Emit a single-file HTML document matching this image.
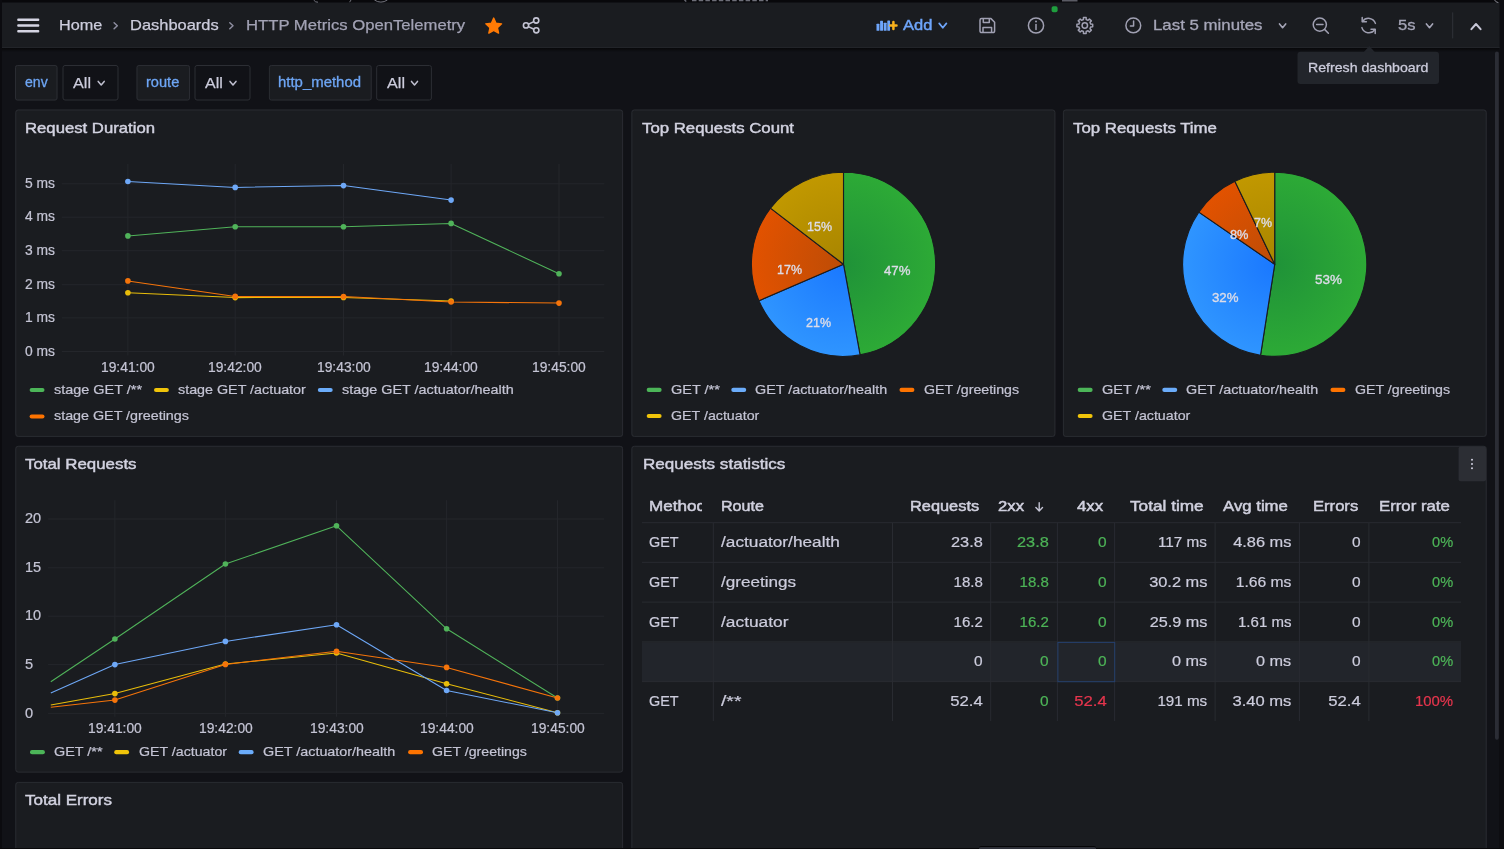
<!DOCTYPE html>
<html lang="en"><head><meta charset="utf-8"><title>HTTP Metrics OpenTelemetry - Dashboards - Grafana</title>
<style>
html,body{margin:0;padding:0;background:#111217;}
body{width:1504px;height:850px;position:relative;overflow:hidden;font-family:"Liberation Sans",sans-serif;color:#ccccdc;}
.t{position:absolute;white-space:nowrap;display:block;}
.b{position:absolute;box-sizing:border-box;}
#tx{position:absolute;left:0;top:0;width:1504px;height:850px;will-change:transform;}
svg{position:absolute;left:0;top:0;overflow:visible;}
svg text{font-family:"Liberation Sans",sans-serif;}
</style></head><body>
<svg width="1504" height="850" viewBox="0 0 1504 850"><defs><linearGradient id="tsh" x1="0" y1="0" x2="0" y2="1"><stop offset="0" stop-color="#000" stop-opacity=".6"/><stop offset="1" stop-color="#000" stop-opacity="0"/></linearGradient><radialGradient id="ga0" gradientUnits="userSpaceOnUse" cx="843.5" cy="264.3" r="92.1"><stop offset="0" stop-color="#1f9238"/><stop offset="1" stop-color="#2daa36"/></radialGradient><radialGradient id="ga1" gradientUnits="userSpaceOnUse" cx="843.5" cy="264.3" r="92.1"><stop offset="0" stop-color="#1a78ff"/><stop offset="1" stop-color="#2f95ff"/></radialGradient><radialGradient id="ga2" gradientUnits="userSpaceOnUse" cx="843.5" cy="264.3" r="92.1"><stop offset="0" stop-color="#bd4c06"/><stop offset="1" stop-color="#e25200"/></radialGradient><radialGradient id="ga3" gradientUnits="userSpaceOnUse" cx="843.5" cy="264.3" r="92.1"><stop offset="0" stop-color="#a88500"/><stop offset="1" stop-color="#c19800"/></radialGradient><radialGradient id="gb0" gradientUnits="userSpaceOnUse" cx="1274.7" cy="264.3" r="92.1"><stop offset="0" stop-color="#1f9238"/><stop offset="1" stop-color="#2daa36"/></radialGradient><radialGradient id="gb1" gradientUnits="userSpaceOnUse" cx="1274.7" cy="264.3" r="92.1"><stop offset="0" stop-color="#1a78ff"/><stop offset="1" stop-color="#2f95ff"/></radialGradient><radialGradient id="gb2" gradientUnits="userSpaceOnUse" cx="1274.7" cy="264.3" r="92.1"><stop offset="0" stop-color="#bd4c06"/><stop offset="1" stop-color="#e25200"/></radialGradient><radialGradient id="gb3" gradientUnits="userSpaceOnUse" cx="1274.7" cy="264.3" r="92.1"><stop offset="0" stop-color="#a88500"/><stop offset="1" stop-color="#c19800"/></radialGradient></defs><rect x="0.00" y="0.00" width="1504.00" height="2.60" fill="#08080b"/>
<rect x="0.00" y="0.00" width="2.00" height="850.00" fill="#0b0b0f"/>
<rect x="1499.00" y="0.00" width="5.00" height="850.00" fill="#0d0d11"/>
<rect x="1495.00" y="51.50" width="3.80" height="688.20" rx="2" fill="#2b2d35"/>
<rect x="2" y="47.8" width="1497" height="4.5" fill="url(#tsh)"/>
<rect x="2.00" y="2.60" width="1497.50" height="45.40" fill="#1a1c20"/>
<rect x="2.00" y="47.00" width="1497.50" height="1.00" fill="#222429"/>
<rect x="17.20" y="18.50" width="22.10" height="2.40" rx="1" fill="#d5d5e3"/>
<rect x="17.20" y="24.30" width="22.10" height="2.40" rx="1" fill="#d5d5e3"/>
<rect x="17.20" y="30.10" width="22.10" height="2.40" rx="1" fill="#d5d5e3"/>
<path d="M114.10000000000001 22.8 L117.3 25.8 L114.10000000000001 28.8" fill="none" stroke="#8e8ea0" stroke-width="1.5" stroke-linecap="round" stroke-linejoin="round"/>
<path d="M229.8 22.8 L233.0 25.8 L229.8 28.8" fill="none" stroke="#8e8ea0" stroke-width="1.5" stroke-linecap="round" stroke-linejoin="round"/>
<polygon points="493.70,18.10 495.99,23.24 501.59,23.84 497.41,27.61 498.58,33.11 493.70,30.30 488.82,33.11 489.99,27.61 485.81,23.84 491.41,23.24" fill="#ff7a05" stroke="#ff7a05" stroke-width="1.4" stroke-linejoin="round"/>
<g fill="none" stroke="#c4c4d4" stroke-width="1.6"><circle cx="536.2" cy="20.5" r="2.6"/><circle cx="536.3" cy="30.3" r="2.6"/><circle cx="526" cy="25.4" r="2.6"/><path d="M528.4 24.2 L533.8 21.6 M528.4 26.6 L533.9 29.2"/></g>
<g fill="#6ea5fa"><rect x="876.5" y="23.8" width="2.9" height="7" rx=".5"/><rect x="880.1" y="20.8" width="2.9" height="10" rx=".5"/><rect x="883.7" y="22.8" width="2.9" height="8" rx=".5"/><rect x="887.3" y="20.4" width="2.7" height="10.4" rx=".5"/></g>
<path d="M893.4 22.1 V28.9 M890.3 25.5 H896.5" stroke="#f9b21c" stroke-width="2.5" stroke-linecap="round" fill="none"/>
<path d="M939.1999999999999 23.400000000000002 L942.8 27.8 L946.4 23.400000000000002" fill="none" stroke="#6ea5fa" stroke-width="1.7" stroke-linecap="round" stroke-linejoin="round"/>
<g fill="none" stroke="#a0a0b2" stroke-width="1.5" stroke-linejoin="round"><path d="M981.6 18.6 H991 L994.6 22.2 V31 a1.6 1.6 0 0 1 -1.6 1.6 H981.6 a1.6 1.6 0 0 1 -1.6 -1.6 V20.2 a1.6 1.6 0 0 1 1.6 -1.6 Z"/><path d="M983.3 18.8 V22.4 H989.3 V18.8"/><path d="M983 32.4 V27.4 H991.6 V32.4"/></g>
<g fill="none" stroke="#a0a0b2" stroke-width="1.5"><circle cx="1036" cy="25.5" r="7.6"/><path d="M1036 24.6 V29.6" stroke-linecap="round"/></g><circle cx="1036" cy="21.6" r="1" fill="#a0a0b2"/>
<rect x="1051.6" y="6.2" width="6" height="6" rx="1.8" fill="#1f9e3e"/>
<g fill="none" stroke="#a0a0b2" stroke-width="1.5" stroke-linejoin="round"><path d="M1092.68 24.15 L1092.68 26.85 L1090.74 26.89 L1089.98 28.72 L1091.33 30.12 L1089.42 32.03 L1088.02 30.68 L1086.19 31.44 L1086.15 33.38 L1083.45 33.38 L1083.41 31.44 L1081.58 30.68 L1080.18 32.03 L1078.27 30.12 L1079.62 28.72 L1078.86 26.89 L1076.92 26.85 L1076.92 24.15 L1078.86 24.11 L1079.62 22.28 L1078.27 20.88 L1080.18 18.97 L1081.58 20.32 L1083.41 19.56 L1083.45 17.62 L1086.15 17.62 L1086.19 19.56 L1088.02 20.32 L1089.42 18.97 L1091.33 20.88 L1089.98 22.28 L1090.74 24.11 Z"/><circle cx="1084.8" cy="25.5" r="2.7"/></g>
<g fill="none" stroke="#a0a0b2" stroke-width="1.5"><circle cx="1133.3" cy="25.4" r="7.4"/><path d="M1133.6 21 V26 H1130.4" stroke-linecap="round" stroke-linejoin="round"/></g>
<path d="M1279.5 23.900000000000002 L1282.6 27.7 L1285.6999999999998 23.900000000000002" fill="none" stroke="#a6a6b8" stroke-width="1.6" stroke-linecap="round" stroke-linejoin="round"/>
<g fill="none" stroke="#a0a0b2" stroke-width="1.5" stroke-linecap="round"><circle cx="1319.8" cy="24.6" r="6.6"/><path d="M1324.8 29.6 L1328.4 33.2 M1316.6 24.6 H1323"/></g>
<g fill="none" stroke="#a0a0b2" stroke-width="1.5" stroke-linecap="round" stroke-linejoin="round"><path d="M1375.4 23.4 A7.2 7.2 0 0 0 1362.6 21.4"/><path d="M1361.9 27.6 A7.2 7.2 0 0 0 1374.8 29.6"/><path d="M1362.2 17.6 V21.8 H1366.4"/><path d="M1375.2 33.4 V29.2 H1371"/></g>
<path d="M1426.4 23.900000000000002 L1429.5 27.7 L1432.6 23.900000000000002" fill="none" stroke="#a6a6b8" stroke-width="1.6" stroke-linecap="round" stroke-linejoin="round"/>
<rect x="1452.20" y="12.40" width="1.00" height="26.00" fill="#303238"/>
<path d="M1471.4 29.200000000000003 L1476 24.0 L1480.6 29.200000000000003" fill="none" stroke="#c8c8d8" stroke-width="2" stroke-linecap="round" stroke-linejoin="round"/>
<path d="M1363.4 52.5 L1369.3 46 L1375.2 52.5 Z" fill="#22252b"/>
<rect x="1297.50" y="51.80" width="141.50" height="32.20" rx="3" fill="#22252b"/>
<rect x="15.00" y="65.00" width="42.50" height="35.50" rx="2" fill="#1a1c20"/>
<rect x="15.50" y="65.50" width="41.50" height="34.50" rx="2" fill="none" stroke="#2a2c32" stroke-width="1"/>
<rect x="62.50" y="65.00" width="56.00" height="35.50" rx="2" fill="#111217"/>
<rect x="63.00" y="65.50" width="55.00" height="34.50" rx="2" fill="none" stroke="#2c2e34" stroke-width="1"/>
<path d="M98.2 81.4 L101.2 85.0 L104.2 81.4" fill="none" stroke="#c0c0d0" stroke-width="1.5" stroke-linecap="round" stroke-linejoin="round"/>
<rect x="136.50" y="65.00" width="53.50" height="35.50" rx="2" fill="#1a1c20"/>
<rect x="137.00" y="65.50" width="52.50" height="34.50" rx="2" fill="none" stroke="#2a2c32" stroke-width="1"/>
<rect x="194.50" y="65.00" width="56.00" height="35.50" rx="2" fill="#111217"/>
<rect x="195.00" y="65.50" width="55.00" height="34.50" rx="2" fill="none" stroke="#2c2e34" stroke-width="1"/>
<path d="M230 81.4 L233 85.0 L236 81.4" fill="none" stroke="#c0c0d0" stroke-width="1.5" stroke-linecap="round" stroke-linejoin="round"/>
<rect x="268.90" y="65.00" width="102.80" height="35.50" rx="2" fill="#1a1c20"/>
<rect x="269.40" y="65.50" width="101.80" height="34.50" rx="2" fill="none" stroke="#2a2c32" stroke-width="1"/>
<rect x="376.20" y="65.00" width="55.70" height="35.50" rx="2" fill="#111217"/>
<rect x="376.70" y="65.50" width="54.70" height="34.50" rx="2" fill="none" stroke="#2c2e34" stroke-width="1"/>
<path d="M411.5 81.4 L414.5 85.0 L417.5 81.4" fill="none" stroke="#c0c0d0" stroke-width="1.5" stroke-linecap="round" stroke-linejoin="round"/>
<rect x="15.30" y="109.50" width="607.80" height="327.40" rx="2.5" fill="#1a1c20"/>
<rect x="15.80" y="110.00" width="606.80" height="326.40" rx="2.5" fill="none" stroke="#292b31" stroke-width="1"/>
<rect x="631.40" y="109.50" width="424.00" height="327.40" rx="2.5" fill="#1a1c20"/>
<rect x="631.90" y="110.00" width="423.00" height="326.40" rx="2.5" fill="none" stroke="#292b31" stroke-width="1"/>
<rect x="1062.90" y="109.50" width="423.80" height="327.40" rx="2.5" fill="#1a1c20"/>
<rect x="1063.40" y="110.00" width="422.80" height="326.40" rx="2.5" fill="none" stroke="#292b31" stroke-width="1"/>
<rect x="15.30" y="445.80" width="607.80" height="326.80" rx="2.5" fill="#1a1c20"/>
<rect x="15.80" y="446.30" width="606.80" height="325.80" rx="2.5" fill="none" stroke="#292b31" stroke-width="1"/>
<rect x="631.40" y="445.80" width="855.30" height="414.20" rx="2.5" fill="#1a1c20"/>
<rect x="631.90" y="446.30" width="854.30" height="413.20" rx="2.5" fill="none" stroke="#292b31" stroke-width="1"/>
<rect x="15.30" y="781.90" width="607.80" height="78.10" rx="2.5" fill="#1a1c20"/>
<rect x="15.80" y="782.40" width="606.80" height="77.10" rx="2.5" fill="none" stroke="#292b31" stroke-width="1"/>
<rect x="29.60" y="388.00" width="14.90" height="4.10" rx="2" fill="#4cb558"/>
<rect x="154.00" y="388.00" width="14.90" height="4.10" rx="2" fill="#f0c40a"/>
<rect x="317.80" y="388.00" width="14.90" height="4.10" rx="2" fill="#6bacfa"/>
<rect x="29.60" y="414.40" width="14.90" height="4.10" rx="2" fill="#fd7300"/>
<rect x="646.70" y="387.80" width="14.90" height="4.10" rx="2" fill="#4cb558"/>
<rect x="731.30" y="387.80" width="14.90" height="4.10" rx="2" fill="#6bacfa"/>
<rect x="899.50" y="387.80" width="14.90" height="4.10" rx="2" fill="#fd7300"/>
<rect x="646.70" y="414.00" width="14.90" height="4.10" rx="2" fill="#f0c40a"/>
<rect x="1077.70" y="387.80" width="14.90" height="4.10" rx="2" fill="#4cb558"/>
<rect x="1162.30" y="387.80" width="14.90" height="4.10" rx="2" fill="#6bacfa"/>
<rect x="1330.50" y="387.80" width="14.90" height="4.10" rx="2" fill="#fd7300"/>
<rect x="1077.70" y="414.00" width="14.90" height="4.10" rx="2" fill="#f0c40a"/>
<rect x="30.00" y="750.10" width="14.90" height="4.10" rx="2" fill="#4cb558"/>
<rect x="114.20" y="750.10" width="14.90" height="4.10" rx="2" fill="#f0c40a"/>
<rect x="238.70" y="750.10" width="14.90" height="4.10" rx="2" fill="#6bacfa"/>
<rect x="408.10" y="750.10" width="14.90" height="4.10" rx="2" fill="#fd7300"/>
<path d="M61.8 183.8 H604.3" stroke="#24262b" stroke-width="1"/>
<path d="M61.8 217.2 H604.3" stroke="#24262b" stroke-width="1"/>
<path d="M61.8 250.7 H604.3" stroke="#24262b" stroke-width="1"/>
<path d="M61.8 284.7 H604.3" stroke="#24262b" stroke-width="1"/>
<path d="M61.8 317.9 H604.3" stroke="#24262b" stroke-width="1"/>
<path d="M61.8 351.5 H604.3" stroke="#24262b" stroke-width="1"/>
<path d="M127.9 164 V355.5" stroke="#24262b" stroke-width="1"/>
<path d="M235.2 164 V355.5" stroke="#24262b" stroke-width="1"/>
<path d="M343.5 164 V355.5" stroke="#24262b" stroke-width="1"/>
<path d="M451.1 164 V355.5" stroke="#24262b" stroke-width="1"/>
<path d="M559 164 V355.5" stroke="#24262b" stroke-width="1"/>
<path d="M127.9 235.9 L235.2 226.7 L343.5 226.8 L451.1 223.4 L559.0 273.8" fill="none" stroke="#50b35a" stroke-width="1.05" stroke-linejoin="round"/>
<circle cx="127.9" cy="235.9" r="2.8" fill="#50b35a"/>
<circle cx="235.2" cy="226.7" r="2.8" fill="#50b35a"/>
<circle cx="343.5" cy="226.8" r="2.8" fill="#50b35a"/>
<circle cx="451.1" cy="223.4" r="2.8" fill="#50b35a"/>
<circle cx="559.0" cy="273.8" r="2.8" fill="#50b35a"/>
<path d="M127.9 292.7 L235.2 297.6 L343.5 297.4 L451.1 301.0" fill="none" stroke="#e8bd0a" stroke-width="1.05" stroke-linejoin="round"/>
<circle cx="127.9" cy="292.7" r="2.8" fill="#e8bd0a"/>
<circle cx="235.2" cy="297.6" r="2.8" fill="#e8bd0a"/>
<circle cx="343.5" cy="297.4" r="2.8" fill="#e8bd0a"/>
<circle cx="451.1" cy="301.0" r="2.8" fill="#e8bd0a"/>
<path d="M127.9 181.5 L235.2 187.4 L343.5 185.6 L451.1 200.1" fill="none" stroke="#6ea8f7" stroke-width="1.05" stroke-linejoin="round"/>
<circle cx="127.9" cy="181.5" r="2.8" fill="#6ea8f7"/>
<circle cx="235.2" cy="187.4" r="2.8" fill="#6ea8f7"/>
<circle cx="343.5" cy="185.6" r="2.8" fill="#6ea8f7"/>
<circle cx="451.1" cy="200.1" r="2.8" fill="#6ea8f7"/>
<path d="M127.9 280.9 L235.2 296.4 L343.5 296.6 L451.1 302.0 L559.0 303.1" fill="none" stroke="#f5740a" stroke-width="1.05" stroke-linejoin="round"/>
<circle cx="127.9" cy="280.9" r="2.8" fill="#f5740a"/>
<circle cx="235.2" cy="296.4" r="2.8" fill="#f5740a"/>
<circle cx="343.5" cy="296.6" r="2.8" fill="#f5740a"/>
<circle cx="451.1" cy="302.0" r="2.8" fill="#f5740a"/>
<circle cx="559.0" cy="303.1" r="2.8" fill="#f5740a"/>
<path d="M48.1 519 H604.2" stroke="#24262b" stroke-width="1"/>
<path d="M48.1 567.8 H604.2" stroke="#24262b" stroke-width="1"/>
<path d="M48.1 616.2 H604.2" stroke="#24262b" stroke-width="1"/>
<path d="M48.1 664.6 H604.2" stroke="#24262b" stroke-width="1"/>
<path d="M48.1 713.4 H604.2" stroke="#24262b" stroke-width="1"/>
<path d="M114.9 500.2 V716.8" stroke="#24262b" stroke-width="1"/>
<path d="M225.4 500.2 V716.8" stroke="#24262b" stroke-width="1"/>
<path d="M336.5 500.2 V716.8" stroke="#24262b" stroke-width="1"/>
<path d="M446.6 500.2 V716.8" stroke="#24262b" stroke-width="1"/>
<path d="M557.5 500.2 V716.8" stroke="#24262b" stroke-width="1"/>
<path d="M50.8 681.7 L114.9 639.0 L225.4 564.0 L336.5 525.8 L446.6 628.8 L557.5 698.0" fill="none" stroke="#50b35a" stroke-width="1.05" stroke-linejoin="round"/>
<circle cx="114.9" cy="639.0" r="2.8" fill="#50b35a"/>
<circle cx="225.4" cy="564.0" r="2.8" fill="#50b35a"/>
<circle cx="336.5" cy="525.8" r="2.8" fill="#50b35a"/>
<circle cx="446.6" cy="628.8" r="2.8" fill="#50b35a"/>
<circle cx="557.5" cy="698.0" r="2.8" fill="#50b35a"/>
<path d="M50.8 704.9 L114.9 693.6 L225.4 664.0 L336.5 653.0 L446.6 683.7 L557.5 712.7" fill="none" stroke="#e8bd0a" stroke-width="1.05" stroke-linejoin="round"/>
<circle cx="114.9" cy="693.6" r="2.8" fill="#e8bd0a"/>
<circle cx="225.4" cy="664.0" r="2.8" fill="#e8bd0a"/>
<circle cx="336.5" cy="653.0" r="2.8" fill="#e8bd0a"/>
<circle cx="446.6" cy="683.7" r="2.8" fill="#e8bd0a"/>
<circle cx="557.5" cy="712.7" r="2.8" fill="#e8bd0a"/>
<path d="M50.8 693.0 L114.9 664.6 L225.4 641.4 L336.5 624.7 L446.6 690.5 L557.5 712.7" fill="none" stroke="#6ea8f7" stroke-width="1.05" stroke-linejoin="round"/>
<circle cx="114.9" cy="664.6" r="2.8" fill="#6ea8f7"/>
<circle cx="225.4" cy="641.4" r="2.8" fill="#6ea8f7"/>
<circle cx="336.5" cy="624.7" r="2.8" fill="#6ea8f7"/>
<circle cx="446.6" cy="690.5" r="2.8" fill="#6ea8f7"/>
<circle cx="557.5" cy="712.7" r="2.8" fill="#6ea8f7"/>
<path d="M50.8 707.3 L114.9 700.1 L225.4 664.4 L336.5 651.3 L446.6 667.4 L557.5 698.0" fill="none" stroke="#f5740a" stroke-width="1.05" stroke-linejoin="round"/>
<circle cx="114.9" cy="700.1" r="2.8" fill="#f5740a"/>
<circle cx="225.4" cy="664.4" r="2.8" fill="#f5740a"/>
<circle cx="336.5" cy="651.3" r="2.8" fill="#f5740a"/>
<circle cx="446.6" cy="667.4" r="2.8" fill="#f5740a"/>
<circle cx="557.5" cy="698.0" r="2.8" fill="#f5740a"/>
<path d="M843.5 264.3 L843.50 172.20 A92.1 92.1 0 0 1 860.06 354.90 Z" fill="url(#ga0)" stroke="#1a1c20" stroke-width="1.1" stroke-linejoin="round"/>
<path d="M843.5 264.3 L860.06 354.90 A92.1 92.1 0 0 1 758.92 300.74 Z" fill="url(#ga1)" stroke="#1a1c20" stroke-width="1.1" stroke-linejoin="round"/>
<path d="M843.5 264.3 L758.92 300.74 A92.1 92.1 0 0 1 770.48 208.16 Z" fill="url(#ga2)" stroke="#1a1c20" stroke-width="1.1" stroke-linejoin="round"/>
<path d="M843.5 264.3 L770.48 208.16 A92.1 92.1 0 0 1 843.50 172.20 Z" fill="url(#ga3)" stroke="#1a1c20" stroke-width="1.1" stroke-linejoin="round"/>
<path d="M1274.7 264.3 L1274.70 172.20 A92.1 92.1 0 1 1 1260.53 355.30 Z" fill="url(#gb0)" stroke="#1a1c20" stroke-width="1.1" stroke-linejoin="round"/>
<path d="M1274.7 264.3 L1260.53 355.30 A92.1 92.1 0 0 1 1198.83 212.09 Z" fill="url(#gb1)" stroke="#1a1c20" stroke-width="1.1" stroke-linejoin="round"/>
<path d="M1274.7 264.3 L1198.83 212.09 A92.1 92.1 0 0 1 1234.89 181.25 Z" fill="url(#gb2)" stroke="#1a1c20" stroke-width="1.1" stroke-linejoin="round"/>
<path d="M1274.7 264.3 L1234.89 181.25 A92.1 92.1 0 0 1 1274.70 172.20 Z" fill="url(#gb3)" stroke="#1a1c20" stroke-width="1.1" stroke-linejoin="round"/>
<rect x="642.00" y="642.40" width="819.00" height="39.20" fill="#22252b"/>
<rect x="642.00" y="522.20" width="819.00" height="1.00" fill="#292b31"/>
<rect x="642.00" y="561.80" width="819.00" height="1.00" fill="#292b31"/>
<rect x="642.00" y="601.60" width="819.00" height="1.00" fill="#292b31"/>
<rect x="642.00" y="641.40" width="819.00" height="1.00" fill="#292b31"/>
<rect x="642.00" y="681.10" width="819.00" height="1.00" fill="#292b31"/>
<rect x="712.80" y="522.70" width="1.00" height="198.30" fill="#292b31"/>
<rect x="892.00" y="522.70" width="1.00" height="198.30" fill="#292b31"/>
<rect x="990.20" y="522.70" width="1.00" height="198.30" fill="#292b31"/>
<rect x="1056.90" y="522.70" width="1.00" height="198.30" fill="#292b31"/>
<rect x="1114.10" y="522.70" width="1.00" height="198.30" fill="#292b31"/>
<rect x="1214.60" y="522.70" width="1.00" height="198.30" fill="#292b31"/>
<rect x="1298.90" y="522.70" width="1.00" height="198.30" fill="#292b31"/>
<rect x="1368.40" y="522.70" width="1.00" height="198.30" fill="#292b31"/>
<rect x="1057.90" y="642.40" width="56.80" height="39.30" fill="none" stroke="#25406d" stroke-width="1"/>
<path d="M1039.2 502.8 V510.6 M1035.9 507.6 L1039.2 510.9 L1042.5 507.6" fill="none" stroke="#c4c4d4" stroke-width="1.4" stroke-linecap="round" stroke-linejoin="round"/>
<rect x="1458.60" y="446.60" width="27.40" height="34.60" rx="2" fill="#2c2e34"/>
<circle cx="1472" cy="459.8" r="1.05" fill="#c8c8d8"/>
<circle cx="1472" cy="464" r="1.05" fill="#c8c8d8"/>
<circle cx="1472" cy="468.2" r="1.05" fill="#c8c8d8"/>
<path d="M313.6 0 q2 2.6 4.4 2.2 M349.6 2.2 l1.4 -2.2 M374.4 0 q6.4 4.2 13 0" fill="none" stroke="#7d7e88" stroke-width=".9"/>
<path d="M684.5 0 l1.8 1.6 M692 .6 h76" fill="none" stroke="#6d6e78" stroke-width="1.3" stroke-dasharray="4.5 2.2"/>
<rect x="1062" y="0" width="15.5" height="1.5" fill="#5a5b64"/>
<path d="M1494.6 0 q1.2 2.4 3.8 2.6" fill="none" stroke="#8a8b95" stroke-width="1"/></svg>
<div class="b" style="left:0;top:848px;width:1504px;height:1px;background:#08080a"></div>
<div class="b" style="left:978.7px;top:845.8px;width:117.8px;height:3.2px;background:#2d2f37;border-top:1px solid #050507;border-radius:2px 2px 0 0"></div>
<div class="b" style="left:0;top:848.8px;width:1504px;height:1.2px;background:#fbfbfc"></div>
<div id="tx"><span class="t" style="font-size:15px;line-height:21px;top:13.87px;color:#ccccdc;-webkit-text-stroke:0.25px #ccccdc;left:59.40px;transform-origin:0 50%;transform:scaleX(1.0821);">Home</span>
<span class="t" style="font-size:15px;line-height:21px;top:13.87px;color:#ccccdc;-webkit-text-stroke:0.25px #ccccdc;left:129.70px;transform-origin:0 50%;transform:scaleX(1.0966);">Dashboards</span>
<span class="t" style="font-size:15px;line-height:21px;top:13.87px;color:#a2a2b4;-webkit-text-stroke:0.25px #a2a2b4;left:245.80px;transform-origin:0 50%;transform:scaleX(1.1111);">HTTP Metrics OpenTelemetry</span>
<span class="t" style="font-size:15px;line-height:21px;top:13.87px;color:#6ea5fa;-webkit-text-stroke:0.45px #6ea5fa;left:902.60px;transform-origin:0 50%;transform:scaleX(1.1015);">Add</span>
<span class="t" style="font-size:15px;line-height:21px;top:14.47px;color:#a6a6b8;-webkit-text-stroke:0.3px #a6a6b8;left:1152.50px;transform-origin:0 50%;transform:scaleX(1.1225);">Last 5 minutes</span>
<span class="t" style="font-size:15px;line-height:21px;top:14.47px;color:#a6a6b8;-webkit-text-stroke:0.3px #a6a6b8;left:1398.00px;transform-origin:0 50%;transform:scaleX(1.1046);">5s</span>
<span class="t" style="font-size:13.3px;line-height:19px;top:58.43px;color:#ccccdc;-webkit-text-stroke:0.3px #ccccdc;left:1308.00px;transform-origin:0 50%;transform:scaleX(1.0634);">Refresh dashboard</span>
<span class="t" style="font-size:14.5px;line-height:20px;top:72.49px;color:#6ea6f5;-webkit-text-stroke:0.3px #6ea6f5;left:24.80px;transform-origin:0 50%;transform:scaleX(0.9710);">env</span>
<span class="t" style="font-size:15px;line-height:21px;top:71.77px;color:#ccccdc;-webkit-text-stroke:0.25px #ccccdc;left:72.50px;transform-origin:0 50%;transform:scaleX(1.0797);">All</span>
<span class="t" style="font-size:14.5px;line-height:20px;top:72.49px;color:#6ea6f5;-webkit-text-stroke:0.3px #6ea6f5;left:146.20px;transform-origin:0 50%;transform:scaleX(1.0075);">route</span>
<span class="t" style="font-size:15px;line-height:21px;top:71.77px;color:#ccccdc;-webkit-text-stroke:0.25px #ccccdc;left:205.00px;transform-origin:0 50%;transform:scaleX(1.0677);">All</span>
<span class="t" style="font-size:14.5px;line-height:20px;top:72.49px;color:#6ea6f5;-webkit-text-stroke:0.3px #6ea6f5;left:278.30px;transform-origin:0 50%;transform:scaleX(1.0296);">http_method</span>
<span class="t" style="font-size:15px;line-height:21px;top:71.77px;color:#ccccdc;-webkit-text-stroke:0.25px #ccccdc;left:386.60px;transform-origin:0 50%;transform:scaleX(1.0797);">All</span>
<span class="t" style="font-size:15px;line-height:21px;top:116.67px;color:#d2d2e0;-webkit-text-stroke:0.45px #d2d2e0;left:25.00px;transform-origin:0 50%;transform:scaleX(1.1136);">Request Duration</span>
<span class="t" style="font-size:15px;line-height:21px;top:116.67px;color:#d2d2e0;-webkit-text-stroke:0.45px #d2d2e0;left:642.20px;transform-origin:0 50%;transform:scaleX(1.1183);">Top Requests Count</span>
<span class="t" style="font-size:15px;line-height:21px;top:116.67px;color:#d2d2e0;-webkit-text-stroke:0.45px #d2d2e0;left:1073.30px;transform-origin:0 50%;transform:scaleX(1.1207);">Top Requests Time</span>
<span class="t" style="font-size:15px;line-height:21px;top:452.98px;color:#d2d2e0;-webkit-text-stroke:0.45px #d2d2e0;left:25.00px;transform-origin:0 50%;transform:scaleX(1.1237);">Total Requests</span>
<span class="t" style="font-size:15px;line-height:21px;top:452.98px;color:#d2d2e0;-webkit-text-stroke:0.45px #d2d2e0;left:642.50px;transform-origin:0 50%;transform:scaleX(1.1380);">Requests statistics</span>
<span class="t" style="font-size:15px;line-height:21px;top:789.08px;color:#d2d2e0;-webkit-text-stroke:0.45px #d2d2e0;left:25.00px;transform-origin:0 50%;transform:scaleX(1.1345);">Total Errors</span>
<span class="t" style="font-size:13.5px;line-height:19px;top:379.93px;color:#c4c4d4;-webkit-text-stroke:0.22px #c4c4d4;left:53.60px;transform-origin:0 50%;transform:scaleX(1.0694);">stage GET /**</span>
<span class="t" style="font-size:13.5px;line-height:19px;top:379.93px;color:#c4c4d4;-webkit-text-stroke:0.22px #c4c4d4;left:178.00px;transform-origin:0 50%;transform:scaleX(1.0600);">stage GET /actuator</span>
<span class="t" style="font-size:13.5px;line-height:19px;top:379.93px;color:#c4c4d4;-webkit-text-stroke:0.22px #c4c4d4;left:342.30px;transform-origin:0 50%;transform:scaleX(1.0658);">stage GET /actuator/health</span>
<span class="t" style="font-size:13.5px;line-height:19px;top:406.33px;color:#c4c4d4;-webkit-text-stroke:0.22px #c4c4d4;left:53.60px;transform-origin:0 50%;transform:scaleX(1.0595);">stage GET /greetings</span>
<span class="t" style="font-size:13.5px;line-height:19px;top:379.73px;color:#c4c4d4;-webkit-text-stroke:0.22px #c4c4d4;left:670.60px;transform-origin:0 50%;transform:scaleX(1.0721);">GET /**</span>
<span class="t" style="font-size:13.5px;line-height:19px;top:379.73px;color:#c4c4d4;-webkit-text-stroke:0.22px #c4c4d4;left:755.20px;transform-origin:0 50%;transform:scaleX(1.0626);">GET /actuator/health</span>
<span class="t" style="font-size:13.5px;line-height:19px;top:379.73px;color:#c4c4d4;-webkit-text-stroke:0.22px #c4c4d4;left:923.80px;transform-origin:0 50%;transform:scaleX(1.0503);">GET /greetings</span>
<span class="t" style="font-size:13.5px;line-height:19px;top:405.93px;color:#c4c4d4;-webkit-text-stroke:0.22px #c4c4d4;left:670.60px;transform-origin:0 50%;transform:scaleX(1.0538);">GET /actuator</span>
<span class="t" style="font-size:13.5px;line-height:19px;top:379.73px;color:#c4c4d4;-webkit-text-stroke:0.22px #c4c4d4;left:1101.60px;transform-origin:0 50%;transform:scaleX(1.0721);">GET /**</span>
<span class="t" style="font-size:13.5px;line-height:19px;top:379.73px;color:#c4c4d4;-webkit-text-stroke:0.22px #c4c4d4;left:1186.20px;transform-origin:0 50%;transform:scaleX(1.0626);">GET /actuator/health</span>
<span class="t" style="font-size:13.5px;line-height:19px;top:379.73px;color:#c4c4d4;-webkit-text-stroke:0.22px #c4c4d4;left:1354.80px;transform-origin:0 50%;transform:scaleX(1.0503);">GET /greetings</span>
<span class="t" style="font-size:13.5px;line-height:19px;top:405.93px;color:#c4c4d4;-webkit-text-stroke:0.22px #c4c4d4;left:1101.60px;transform-origin:0 50%;transform:scaleX(1.0538);">GET /actuator</span>
<span class="t" style="font-size:13.5px;line-height:19px;top:742.03px;color:#c4c4d4;-webkit-text-stroke:0.22px #c4c4d4;left:53.50px;transform-origin:0 50%;transform:scaleX(1.0656);">GET /**</span>
<span class="t" style="font-size:13.5px;line-height:19px;top:742.03px;color:#c4c4d4;-webkit-text-stroke:0.22px #c4c4d4;left:138.50px;transform-origin:0 50%;transform:scaleX(1.0502);">GET /actuator</span>
<span class="t" style="font-size:13.5px;line-height:19px;top:742.03px;color:#c4c4d4;-webkit-text-stroke:0.22px #c4c4d4;left:263.00px;transform-origin:0 50%;transform:scaleX(1.0634);">GET /actuator/health</span>
<span class="t" style="font-size:13.5px;line-height:19px;top:742.03px;color:#c4c4d4;-webkit-text-stroke:0.22px #c4c4d4;left:431.60px;transform-origin:0 50%;transform:scaleX(1.0481);">GET /greetings</span>
<span class="t" style="font-size:14px;line-height:20px;top:173.01px;color:#c4c4d4;-webkit-text-stroke:0.22px #c4c4d4;left:25.20px;transform-origin:0 50%;transform:scaleX(0.9888);">5 ms</span>
<span class="t" style="font-size:14px;line-height:20px;top:206.41px;color:#c4c4d4;-webkit-text-stroke:0.22px #c4c4d4;left:25.20px;transform-origin:0 50%;transform:scaleX(0.9888);">4 ms</span>
<span class="t" style="font-size:14px;line-height:20px;top:239.91px;color:#c4c4d4;-webkit-text-stroke:0.22px #c4c4d4;left:25.20px;transform-origin:0 50%;transform:scaleX(0.9888);">3 ms</span>
<span class="t" style="font-size:14px;line-height:20px;top:273.91px;color:#c4c4d4;-webkit-text-stroke:0.22px #c4c4d4;left:25.20px;transform-origin:0 50%;transform:scaleX(0.9888);">2 ms</span>
<span class="t" style="font-size:14px;line-height:20px;top:307.11px;color:#c4c4d4;-webkit-text-stroke:0.22px #c4c4d4;left:25.20px;transform-origin:0 50%;transform:scaleX(0.9888);">1 ms</span>
<span class="t" style="font-size:14px;line-height:20px;top:340.71px;color:#c4c4d4;-webkit-text-stroke:0.22px #c4c4d4;left:25.20px;transform-origin:0 50%;transform:scaleX(0.9888);">0 ms</span>
<span class="t" style="font-size:14px;line-height:20px;top:356.81px;color:#c4c4d4;-webkit-text-stroke:0.22px #c4c4d4;left:101.00px;transform-origin:0 50%;transform:scaleX(0.9872);">19:41:00</span>
<span class="t" style="font-size:14px;line-height:20px;top:356.81px;color:#c4c4d4;-webkit-text-stroke:0.22px #c4c4d4;left:208.30px;transform-origin:0 50%;transform:scaleX(0.9872);">19:42:00</span>
<span class="t" style="font-size:14px;line-height:20px;top:356.81px;color:#c4c4d4;-webkit-text-stroke:0.22px #c4c4d4;left:316.60px;transform-origin:0 50%;transform:scaleX(0.9872);">19:43:00</span>
<span class="t" style="font-size:14px;line-height:20px;top:356.81px;color:#c4c4d4;-webkit-text-stroke:0.22px #c4c4d4;left:424.20px;transform-origin:0 50%;transform:scaleX(0.9872);">19:44:00</span>
<span class="t" style="font-size:14px;line-height:20px;top:356.81px;color:#c4c4d4;-webkit-text-stroke:0.22px #c4c4d4;left:532.10px;transform-origin:0 50%;transform:scaleX(0.9872);">19:45:00</span>
<span class="t" style="font-size:14px;line-height:20px;top:508.21px;color:#c4c4d4;-webkit-text-stroke:0.22px #c4c4d4;left:25.20px;transform-origin:0 50%;transform:scaleX(1.0339);">20</span>
<span class="t" style="font-size:14px;line-height:20px;top:557.01px;color:#c4c4d4;-webkit-text-stroke:0.22px #c4c4d4;left:25.20px;transform-origin:0 50%;transform:scaleX(1.0339);">15</span>
<span class="t" style="font-size:14px;line-height:20px;top:605.41px;color:#c4c4d4;-webkit-text-stroke:0.22px #c4c4d4;left:25.20px;transform-origin:0 50%;transform:scaleX(1.0339);">10</span>
<span class="t" style="font-size:14px;line-height:20px;top:653.81px;color:#c4c4d4;-webkit-text-stroke:0.22px #c4c4d4;left:25.20px;transform-origin:0 50%;transform:scaleX(1.0403);">5</span>
<span class="t" style="font-size:14px;line-height:20px;top:702.61px;color:#c4c4d4;-webkit-text-stroke:0.22px #c4c4d4;left:25.20px;transform-origin:0 50%;transform:scaleX(1.0403);">0</span>
<span class="t" style="font-size:14px;line-height:20px;top:718.41px;color:#c4c4d4;-webkit-text-stroke:0.22px #c4c4d4;left:88.00px;transform-origin:0 50%;transform:scaleX(0.9872);">19:41:00</span>
<span class="t" style="font-size:14px;line-height:20px;top:718.41px;color:#c4c4d4;-webkit-text-stroke:0.22px #c4c4d4;left:198.50px;transform-origin:0 50%;transform:scaleX(0.9872);">19:42:00</span>
<span class="t" style="font-size:14px;line-height:20px;top:718.41px;color:#c4c4d4;-webkit-text-stroke:0.22px #c4c4d4;left:309.60px;transform-origin:0 50%;transform:scaleX(0.9872);">19:43:00</span>
<span class="t" style="font-size:14px;line-height:20px;top:718.41px;color:#c4c4d4;-webkit-text-stroke:0.22px #c4c4d4;left:419.70px;transform-origin:0 50%;transform:scaleX(0.9872);">19:44:00</span>
<span class="t" style="font-size:14px;line-height:20px;top:718.41px;color:#c4c4d4;-webkit-text-stroke:0.22px #c4c4d4;left:530.60px;transform-origin:0 50%;transform:scaleX(0.9872);">19:45:00</span>
<span class="t" style="font-size:13.5px;line-height:19px;top:260.83px;color:#dcdce8;-webkit-text-stroke:0.38px #dcdce8;left:883.70px;transform-origin:0 50%;transform:scaleX(0.9771);">47%</span>
<span class="t" style="font-size:13.5px;line-height:19px;top:313.43px;color:#dcdce8;-webkit-text-stroke:0.38px #dcdce8;left:805.50px;transform-origin:0 50%;transform:scaleX(0.9252);">21%</span>
<span class="t" style="font-size:13.5px;line-height:19px;top:259.53px;color:#dcdce8;-webkit-text-stroke:0.38px #dcdce8;left:777.00px;transform-origin:0 50%;transform:scaleX(0.9252);">17%</span>
<span class="t" style="font-size:13.5px;line-height:19px;top:217.13px;color:#dcdce8;-webkit-text-stroke:0.38px #dcdce8;left:807.30px;transform-origin:0 50%;transform:scaleX(0.9252);">15%</span>
<span class="t" style="font-size:13.5px;line-height:19px;top:270.13px;color:#dcdce8;-webkit-text-stroke:0.38px #dcdce8;left:1314.70px;transform-origin:0 50%;transform:scaleX(0.9993);">53%</span>
<span class="t" style="font-size:13.5px;line-height:19px;top:288.03px;color:#dcdce8;-webkit-text-stroke:0.38px #dcdce8;left:1212.25px;transform-origin:0 50%;transform:scaleX(0.9808);">32%</span>
<span class="t" style="font-size:13.5px;line-height:19px;top:224.93px;color:#dcdce8;-webkit-text-stroke:0.38px #dcdce8;left:1230.15px;transform-origin:0 50%;transform:scaleX(0.9481);">8%</span>
<span class="t" style="font-size:13.5px;line-height:19px;top:213.23px;color:#dcdce8;-webkit-text-stroke:0.38px #dcdce8;left:1253.70px;transform-origin:0 50%;transform:scaleX(0.9225);">7%</span>
<div class="b" style="left:649.2px;top:489.6px;width:52.7px;height:34px;overflow:hidden"><span class="t" style="font-size:15px;line-height:21px;top:5.47px;color:#d0d0de;-webkit-text-stroke:0.5px #d0d0de;left:0.00px;transform-origin:0 50%;transform:scaleX(1.1392);">Method</span></div>
<span class="t" style="font-size:15px;line-height:21px;top:495.08px;color:#d0d0de;-webkit-text-stroke:0.5px #d0d0de;left:720.60px;transform-origin:0 50%;transform:scaleX(1.0718);">Route</span>
<span class="t" style="font-size:15px;line-height:21px;top:495.08px;color:#d0d0de;-webkit-text-stroke:0.5px #d0d0de;left:910.00px;transform-origin:0 50%;transform:scaleX(1.0904);">Requests</span>
<span class="t" style="font-size:15px;line-height:21px;top:495.08px;color:#d0d0de;-webkit-text-stroke:0.5px #d0d0de;left:998.20px;transform-origin:0 50%;transform:scaleX(1.1138);">2xx</span>
<span class="t" style="font-size:15px;line-height:21px;top:495.08px;color:#d0d0de;-webkit-text-stroke:0.5px #d0d0de;left:1076.60px;transform-origin:0 50%;transform:scaleX(1.1181);">4xx</span>
<span class="t" style="font-size:15px;line-height:21px;top:495.08px;color:#d0d0de;-webkit-text-stroke:0.5px #d0d0de;left:1130.20px;transform-origin:0 50%;transform:scaleX(1.1481);">Total time</span>
<span class="t" style="font-size:15px;line-height:21px;top:495.08px;color:#d0d0de;-webkit-text-stroke:0.5px #d0d0de;left:1223.00px;transform-origin:0 50%;transform:scaleX(1.1174);">Avg time</span>
<span class="t" style="font-size:15px;line-height:21px;top:495.08px;color:#d0d0de;-webkit-text-stroke:0.5px #d0d0de;left:1312.80px;transform-origin:0 50%;transform:scaleX(1.1069);">Errors</span>
<span class="t" style="font-size:15px;line-height:21px;top:495.08px;color:#d0d0de;-webkit-text-stroke:0.5px #d0d0de;left:1378.50px;transform-origin:0 50%;transform:scaleX(1.1176);">Error rate</span>
<span class="t" style="font-size:15.3px;line-height:21px;top:531.16px;color:#ccccdc;-webkit-text-stroke:0.22px #ccccdc;left:649.20px;transform-origin:0 50%;transform:scaleX(0.9411);">GET</span>
<span class="t" style="font-size:15.3px;line-height:21px;top:531.16px;color:#ccccdc;-webkit-text-stroke:0.22px #ccccdc;left:720.60px;transform-origin:0 50%;transform:scaleX(1.1273);">/actuator/health</span>
<span class="t" style="font-size:15.3px;line-height:21px;top:531.16px;color:#ccccdc;-webkit-text-stroke:0.22px #ccccdc;right:521.20px;transform-origin:100% 50%;transform:scaleX(1.0679);">23.8</span>
<span class="t" style="font-size:15.3px;line-height:21px;top:531.16px;color:#4db457;-webkit-text-stroke:0.22px #4db457;right:455.00px;transform-origin:100% 50%;transform:scaleX(1.0679);">23.8</span>
<span class="t" style="font-size:15.3px;line-height:21px;top:531.16px;color:#4db457;-webkit-text-stroke:0.22px #4db457;right:397.70px;transform-origin:100% 50%;transform:scaleX(1.0106);">0</span>
<span class="t" style="font-size:15.3px;line-height:21px;top:531.16px;color:#ccccdc;-webkit-text-stroke:0.22px #ccccdc;right:296.80px;transform-origin:100% 50%;transform:scaleX(1.0012);">117 ms</span>
<span class="t" style="font-size:15.3px;line-height:21px;top:531.16px;color:#ccccdc;-webkit-text-stroke:0.22px #ccccdc;right:212.80px;transform-origin:100% 50%;transform:scaleX(1.0712);">4.86 ms</span>
<span class="t" style="font-size:15.3px;line-height:21px;top:531.16px;color:#ccccdc;-webkit-text-stroke:0.22px #ccccdc;right:143.00px;transform-origin:100% 50%;transform:scaleX(1.0106);">0</span>
<span class="t" style="font-size:15.3px;line-height:21px;top:531.16px;color:#4db457;-webkit-text-stroke:0.22px #4db457;right:50.70px;transform-origin:100% 50%;transform:scaleX(0.9542);">0%</span>
<span class="t" style="font-size:15.3px;line-height:21px;top:570.86px;color:#ccccdc;-webkit-text-stroke:0.22px #ccccdc;left:649.20px;transform-origin:0 50%;transform:scaleX(0.9411);">GET</span>
<span class="t" style="font-size:15.3px;line-height:21px;top:570.86px;color:#ccccdc;-webkit-text-stroke:0.22px #ccccdc;left:720.60px;transform-origin:0 50%;transform:scaleX(1.1177);">/greetings</span>
<span class="t" style="font-size:15.3px;line-height:21px;top:570.86px;color:#ccccdc;-webkit-text-stroke:0.22px #ccccdc;right:521.20px;transform-origin:100% 50%;transform:scaleX(0.9806);">18.8</span>
<span class="t" style="font-size:15.3px;line-height:21px;top:570.86px;color:#4db457;-webkit-text-stroke:0.22px #4db457;right:455.00px;transform-origin:100% 50%;transform:scaleX(0.9806);">18.8</span>
<span class="t" style="font-size:15.3px;line-height:21px;top:570.86px;color:#4db457;-webkit-text-stroke:0.22px #4db457;right:397.70px;transform-origin:100% 50%;transform:scaleX(1.0106);">0</span>
<span class="t" style="font-size:15.3px;line-height:21px;top:570.86px;color:#ccccdc;-webkit-text-stroke:0.22px #ccccdc;right:296.80px;transform-origin:100% 50%;transform:scaleX(1.0712);">30.2 ms</span>
<span class="t" style="font-size:15.3px;line-height:21px;top:570.86px;color:#ccccdc;-webkit-text-stroke:0.22px #ccccdc;right:212.80px;transform-origin:100% 50%;transform:scaleX(1.0234);">1.66 ms</span>
<span class="t" style="font-size:15.3px;line-height:21px;top:570.86px;color:#ccccdc;-webkit-text-stroke:0.22px #ccccdc;right:143.00px;transform-origin:100% 50%;transform:scaleX(1.0106);">0</span>
<span class="t" style="font-size:15.3px;line-height:21px;top:570.86px;color:#4db457;-webkit-text-stroke:0.22px #4db457;right:50.70px;transform-origin:100% 50%;transform:scaleX(0.9542);">0%</span>
<span class="t" style="font-size:15.3px;line-height:21px;top:610.66px;color:#ccccdc;-webkit-text-stroke:0.22px #ccccdc;left:649.20px;transform-origin:0 50%;transform:scaleX(0.9411);">GET</span>
<span class="t" style="font-size:15.3px;line-height:21px;top:610.66px;color:#ccccdc;-webkit-text-stroke:0.22px #ccccdc;left:720.60px;transform-origin:0 50%;transform:scaleX(1.1338);">/actuator</span>
<span class="t" style="font-size:15.3px;line-height:21px;top:610.66px;color:#ccccdc;-webkit-text-stroke:0.22px #ccccdc;right:521.20px;transform-origin:100% 50%;transform:scaleX(0.9806);">16.2</span>
<span class="t" style="font-size:15.3px;line-height:21px;top:610.66px;color:#4db457;-webkit-text-stroke:0.22px #4db457;right:455.00px;transform-origin:100% 50%;transform:scaleX(0.9806);">16.2</span>
<span class="t" style="font-size:15.3px;line-height:21px;top:610.66px;color:#4db457;-webkit-text-stroke:0.22px #4db457;right:397.70px;transform-origin:100% 50%;transform:scaleX(1.0106);">0</span>
<span class="t" style="font-size:15.3px;line-height:21px;top:610.66px;color:#ccccdc;-webkit-text-stroke:0.22px #ccccdc;right:296.80px;transform-origin:100% 50%;transform:scaleX(1.0602);">25.9 ms</span>
<span class="t" style="font-size:15.3px;line-height:21px;top:610.66px;color:#ccccdc;-webkit-text-stroke:0.22px #ccccdc;right:212.80px;transform-origin:100% 50%;transform:scaleX(0.9812);">1.61 ms</span>
<span class="t" style="font-size:15.3px;line-height:21px;top:610.66px;color:#ccccdc;-webkit-text-stroke:0.22px #ccccdc;right:143.00px;transform-origin:100% 50%;transform:scaleX(1.0106);">0</span>
<span class="t" style="font-size:15.3px;line-height:21px;top:610.66px;color:#4db457;-webkit-text-stroke:0.22px #4db457;right:50.70px;transform-origin:100% 50%;transform:scaleX(0.9542);">0%</span>
<span class="t" style="font-size:15.3px;line-height:21px;top:650.41px;color:#ccccdc;-webkit-text-stroke:0.22px #ccccdc;right:521.20px;transform-origin:100% 50%;transform:scaleX(1.0106);">0</span>
<span class="t" style="font-size:15.3px;line-height:21px;top:650.41px;color:#4db457;-webkit-text-stroke:0.22px #4db457;right:455.00px;transform-origin:100% 50%;transform:scaleX(1.0106);">0</span>
<span class="t" style="font-size:15.3px;line-height:21px;top:650.41px;color:#4db457;-webkit-text-stroke:0.22px #4db457;right:397.70px;transform-origin:100% 50%;transform:scaleX(1.0106);">0</span>
<span class="t" style="font-size:15.3px;line-height:21px;top:650.41px;color:#ccccdc;-webkit-text-stroke:0.22px #ccccdc;right:296.80px;transform-origin:100% 50%;transform:scaleX(1.0617);">0 ms</span>
<span class="t" style="font-size:15.3px;line-height:21px;top:650.41px;color:#ccccdc;-webkit-text-stroke:0.22px #ccccdc;right:212.80px;transform-origin:100% 50%;transform:scaleX(1.0617);">0 ms</span>
<span class="t" style="font-size:15.3px;line-height:21px;top:650.41px;color:#ccccdc;-webkit-text-stroke:0.22px #ccccdc;right:143.00px;transform-origin:100% 50%;transform:scaleX(1.0106);">0</span>
<span class="t" style="font-size:15.3px;line-height:21px;top:650.41px;color:#4db457;-webkit-text-stroke:0.22px #4db457;right:50.70px;transform-origin:100% 50%;transform:scaleX(0.9542);">0%</span>
<span class="t" style="font-size:15.3px;line-height:21px;top:690.11px;color:#ccccdc;-webkit-text-stroke:0.22px #ccccdc;left:649.20px;transform-origin:0 50%;transform:scaleX(0.9411);">GET</span>
<span class="t" style="font-size:15.3px;line-height:21px;top:690.11px;color:#ccccdc;-webkit-text-stroke:0.22px #ccccdc;left:720.60px;transform-origin:0 50%;transform:scaleX(1.2625);">/**</span>
<span class="t" style="font-size:15.3px;line-height:21px;top:690.11px;color:#ccccdc;-webkit-text-stroke:0.22px #ccccdc;right:521.20px;transform-origin:100% 50%;transform:scaleX(1.0914);">52.4</span>
<span class="t" style="font-size:15.3px;line-height:21px;top:690.11px;color:#4db457;-webkit-text-stroke:0.22px #4db457;right:455.00px;transform-origin:100% 50%;transform:scaleX(1.0106);">0</span>
<span class="t" style="font-size:15.3px;line-height:21px;top:690.11px;color:#e5354d;-webkit-text-stroke:0.22px #e5354d;right:397.70px;transform-origin:100% 50%;transform:scaleX(1.0914);">52.4</span>
<span class="t" style="font-size:15.3px;line-height:21px;top:690.11px;color:#ccccdc;-webkit-text-stroke:0.22px #ccccdc;right:296.80px;transform-origin:100% 50%;transform:scaleX(0.9925);">191 ms</span>
<span class="t" style="font-size:15.3px;line-height:21px;top:690.11px;color:#ccccdc;-webkit-text-stroke:0.22px #ccccdc;right:212.80px;transform-origin:100% 50%;transform:scaleX(1.0841);">3.40 ms</span>
<span class="t" style="font-size:15.3px;line-height:21px;top:690.11px;color:#ccccdc;-webkit-text-stroke:0.22px #ccccdc;right:143.00px;transform-origin:100% 50%;transform:scaleX(1.0914);">52.4</span>
<span class="t" style="font-size:15.3px;line-height:21px;top:690.11px;color:#e5354d;-webkit-text-stroke:0.22px #e5354d;right:50.70px;transform-origin:100% 50%;transform:scaleX(0.9762);">100%</span></div>
</body></html>
